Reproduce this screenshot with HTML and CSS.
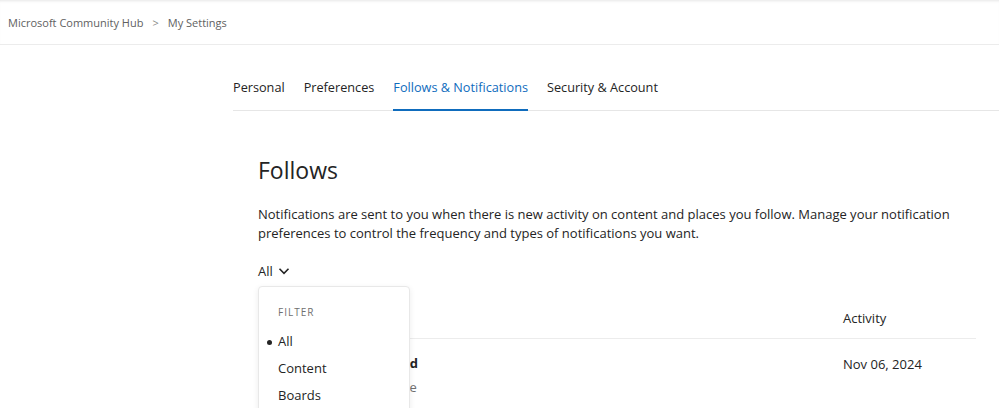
FILE: index.html
```html
<!DOCTYPE html>
<html lang="en">
<head>
  <meta charset="UTF-8">
  <title>My Settings</title>
  <link rel="stylesheet" href="styles.css">
</head>
<body>

<header class="topbar">
  <nav class="crumbs">
    <a href="#">Microsoft Community Hub</a>
    <span class="crumb-sep">&gt;</span>
    <span>My Settings</span>
  </nav>
</header>

<main class="settings">
  <nav class="tabs">
    <a href="#" class="tab">Personal</a>
    <a href="#" class="tab">Preferences</a>
    <a href="#" class="tab active">Follows &amp; Notifications</a>
    <a href="#" class="tab">Security &amp; Account</a>
  </nav>

  <section class="follows">
    <h1>Follows</h1>
    <p class="intro">Notifications are sent to you when there is new activity on content and places you follow. Manage your notification preferences to control the frequency and types of notifications you want.</p>

    <div class="filter">
      <button class="filter-toggle">All
        <svg width="12" height="12" viewBox="0 0 12 12"><path d="M1.5 3.8l4.5 4.5 4.5-4.5" fill="none" stroke="#242424" stroke-width="1.6"/></svg>
      </button>
      <div class="filter-menu">
        <div class="filter-title">FILTER</div>
        <a href="#" class="filter-item selected">All</a>
        <a href="#" class="filter-item">Content</a>
        <a href="#" class="filter-item">Boards</a>
      </div>
    </div>

    <table class="follow-table">
      <thead>
        <tr><th></th><th class="col-activity">Activity</th></tr>
      </thead>
      <tbody>
        <tr>
          <td>
            <div class="item-title">Microsoft 365 Hub Board</div>
            <div class="item-type">Community · Forum space</div>
          </td>
          <td class="col-activity">Nov 06, 2024</td>
        </tr>
      </tbody>
    </table>
  </section>
</main>

</body>
</html>
```

FILE: styles.css
```css
html, body {
  margin: 0;
  padding: 0;
  height: 100%;
  overflow: hidden;
  background: #fff;
  font-family: "Open Sans", "Noto Sans", sans-serif;
  color: #242424;
}

a {
  color: inherit;
  text-decoration: none;
}

.topbar {
  height: 44px;
  border-bottom: 1px solid #ececec;
  box-shadow: inset 0 3px 3px -2px #e6e6e6;
  display: flex;
  align-items: center;
  padding-left: 8px;
}

.crumbs {
  font-size: 11px;
  color: #616161;
  display: flex;
  gap: 9px;
}

.crumb-sep {
  color: #8a8a8a;
}

.settings {
  padding-left: 233px;
  padding-top: 30px;
}

.tabs {
  display: flex;
  gap: 19px;
  border-bottom: 1px solid #e6e6e6;
}

.tab {
  font-size: 12.7px;
  line-height: 24px;
  padding-bottom: 10px;
  margin-bottom: -1px;
  border-bottom: 2px solid transparent;
  color: #242424;
}

.tab.active {
  color: #0f6cbd;
  border-bottom-color: #0f6cbd;
}

.follows {
  padding-left: 25px;
  width: 718px;
}

.follows h1 {
  font-size: 23px;
  font-weight: 400;
  margin: 44px 0 0;
  line-height: 30px;
}

.intro {
  font-size: 13px;
  line-height: 19px;
  margin: 20px 0 0;
  color: #242424;
}

.filter {
  position: relative;
  margin-top: 18px;
}

.filter-toggle {
  border: 0;
  background: none;
  padding: 0;
  font: inherit;
  font-size: 13px;
  line-height: 20px;
  color: #242424;
  display: flex;
  align-items: center;
  gap: 5px;
}

.filter-menu {
  position: absolute;
  left: 0;
  top: 25px;
  width: 150px;
  height: 200px;
  background: #fff;
  border: 1px solid #e8e8e8;
  border-radius: 4px;
  box-shadow: 0 2px 6px rgba(0, 0, 0, 0.08);
  padding-top: 17px;
  z-index: 2;
}

.filter-title {
  font-size: 10px;
  letter-spacing: 1px;
  color: #707070;
  padding-left: 19px;
  line-height: 16px;
  margin-bottom: 8px;
}

.filter-item {
  display: block;
  position: relative;
  padding-left: 19px;
  font-size: 13px;
  line-height: 27px;
  color: #242424;
}

.filter-item.selected::before {
  content: "";
  position: absolute;
  left: 8px;
  top: 12px;
  width: 5px;
  height: 5px;
  border-radius: 50%;
  background: #242424;
}

.follow-table {
  width: 100%;
  border-collapse: collapse;
  margin-top: 19px;
  font-size: 13px;
}

.follow-table th {
  font-weight: 400;
  text-align: left;
  line-height: 20px;
  padding: 8px 0 10px;
  border-bottom: 1px solid #ececec;
}

.follow-table td {
  vertical-align: top;
  padding: 14px 0;
  line-height: 20px;
}

.col-activity {
  width: 133px;
}

.follow-table td.col-activity {
  padding-top: 15px;
}

.item-title {
  font-weight: 700;
  color: #242424;
}

.item-type {
  color: #707070;
  margin-top: 4px;
}
```
